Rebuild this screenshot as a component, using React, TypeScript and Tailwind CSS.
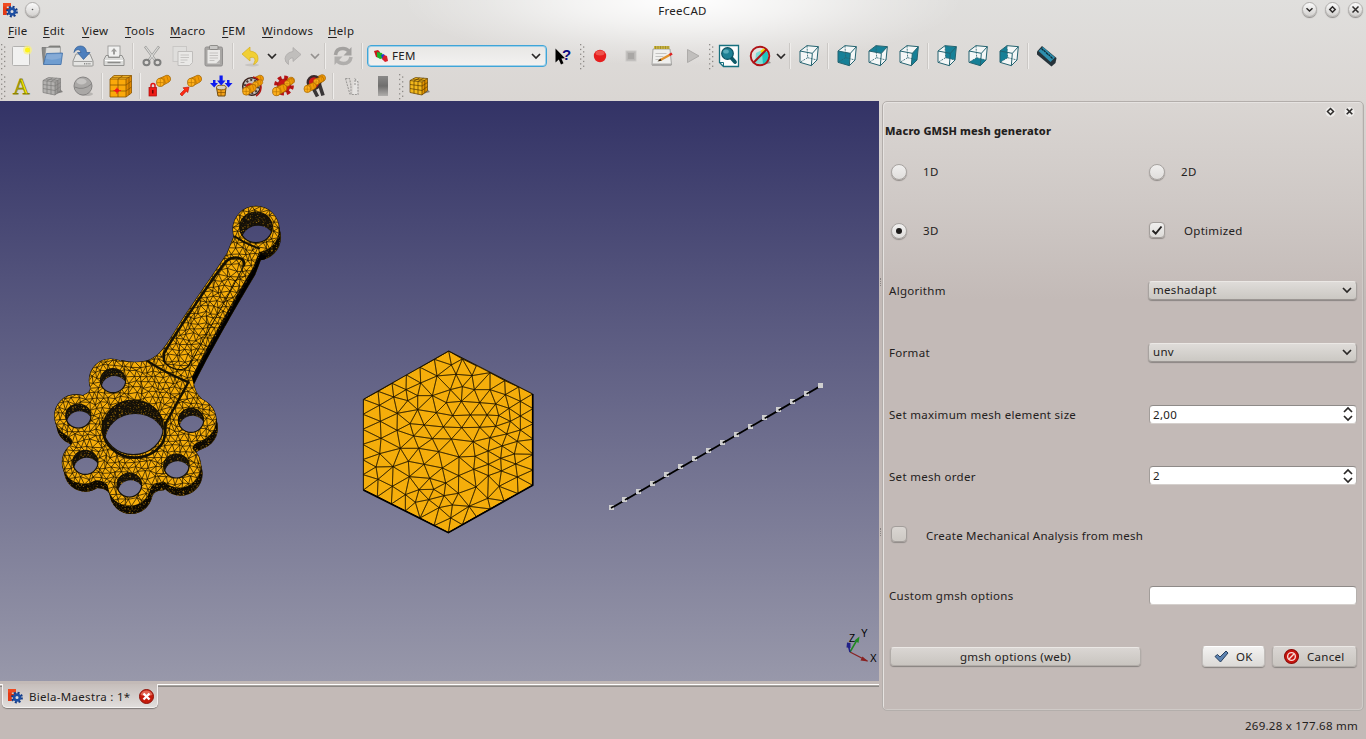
import React from "react";

type Pt = [number, number];

/* ---------- mesh helpers ---------- */

function delaunay(pts: Pt[]): [number, number, number][] {
  const n = pts.length;
  const all: Pt[] = [...pts, [-5000, -5000], [6000, -5000], [300, 9000]];
  let tris: [number, number, number][] = [[n, n + 1, n + 2]];
  const inside = (t: [number, number, number], p: Pt) => {
    const [a, b, c] = t.map((i) => all[i]);
    const d = 2 * (a[0] * (b[1] - c[1]) + b[0] * (c[1] - a[1]) + c[0] * (a[1] - b[1]));
    if (Math.abs(d) < 1e-9) return true;
    const a2 = a[0] ** 2 + a[1] ** 2;
    const b2 = b[0] ** 2 + b[1] ** 2;
    const c2 = c[0] ** 2 + c[1] ** 2;
    const ux = (a2 * (b[1] - c[1]) + b2 * (c[1] - a[1]) + c2 * (a[1] - b[1])) / d;
    const uy = (a2 * (c[0] - b[0]) + b2 * (a[0] - c[0]) + c2 * (b[0] - a[0])) / d;
    const r2 = (a[0] - ux) ** 2 + (a[1] - uy) ** 2;
    return (p[0] - ux) ** 2 + (p[1] - uy) ** 2 < r2;
  };
  for (let i = 0; i < n; i++) {
    const bad = tris.filter((t) => inside(t, all[i]));
    const count = new Map<string, [number, number, number]>();
    bad.forEach((t) =>
      [[t[0], t[1]], [t[1], t[2]], [t[2], t[0]]].forEach(([u, v]) => {
        const k = u < v ? `${u}_${v}` : `${v}_${u}`;
        const e = count.get(k);
        count.set(k, [u, v, e ? e[2] + 1 : 1]);
      }),
    );
    tris = tris.filter((t) => !bad.includes(t));
    count.forEach(([u, v, c]) => {
      if (c === 1) tris.push([u, v, i]);
    });
  }
  return tris.filter((t) => t.every((i) => i < n));
}

const HEX_EDGE: Pt[] = [
  [297, 32], [338, 56], [380, 76], [421, 97], [465, 121], [507, 140], [549, 161], [550, 205], [551, 250], [551, 297],
  [551, 342], [550, 389], [549, 435], [505, 460], [463, 482], [422, 506], [380, 529], [338, 553], [296, 577],
  [253, 556], [211, 533], [167, 512], [125, 491], [83, 469], [41, 449], [40, 403], [39, 358], [39, 312], [39, 267],
  [40, 222], [41, 177], [85, 153], [127, 129], [170, 104], [211, 81], [254, 57],
];
const HEX_IN: Pt[] = [
  [305, 74], [262, 107], [319, 102], [367, 106], [213, 128], [169, 148], [204, 166], [248, 166], [302, 148], [338, 139],
  [374, 148], [421, 148], [467, 163], [512, 183], [174, 181], [132, 170], [89, 195], [143, 219], [204, 208], [260, 217],
  [290, 187], [335, 183], [390, 187], [438, 191], [478, 204], [309, 226], [362, 224], [412, 224], [447, 226], [512, 227],
  [482, 243], [512, 269], [92, 243], [181, 250], [223, 254], [281, 260], [336, 262], [390, 261], [438, 258], [142, 270],
  [192, 287], [248, 295], [305, 296], [370, 304], [421, 292], [471, 281], [503, 303], [94, 294], [152, 324], [207, 324],
  [267, 334], [328, 350], [376, 348], [415, 332], [457, 317], [494, 341], [90, 340], [176, 363], [223, 372], [278, 383],
  [79, 380], [130, 379], [327, 406], [372, 387], [416, 372], [453, 354], [498, 371], [416, 406], [455, 392], [503, 410],
  [85, 417], [128, 438], [179, 409], [240, 414], [288, 428], [379, 440], [326, 459], [448, 438], [414, 474], [358, 498],
  [252, 447], [208, 448], [167, 463], [197, 486], [237, 478], [283, 466], [268, 502], [308, 494], [303, 533],
];
const HEX_PTS = [...HEX_EDGE, ...HEX_IN];
const HEX_MESH = delaunay(HEX_PTS)
  .map((t) => `M${HEX_PTS[t[0]].join(" ")}L${HEX_PTS[t[1]].join(" ")}L${HEX_PTS[t[2]].join(" ")}Z`)
  .join("");
const HEX_OUT = "M297 32L549 161L549 435L296 577L41 449L41 177Z";

function lattice(w: number, h: number, sx: number, sy: number, jitter: number) {
  let seed = 7;
  const rnd = () => {
    seed = (seed * 16807) % 2147483647;
    return seed / 2147483647 - 0.5;
  };
  const cols = Math.ceil(w / sx);
  const rows = Math.ceil(h / sy);
  const p: Pt[][] = [];
  for (let r = 0; r <= rows; r++) {
    p.push([]);
    for (let c = 0; c <= cols; c++)
      p[r].push([Math.round((c + (r % 2) / 2 + rnd() * jitter) * sx), Math.round((r + rnd() * jitter) * sy)]);
  }
  let d = "";
  const seg = (a: Pt, b: Pt) => (d += `M${a[0]} ${a[1]}L${b[0]} ${b[1]}`);
  for (let r = 0; r < rows; r++)
    for (let c = 1; c < cols; c++) {
      seg(p[r][c], p[r][c + 1]);
      seg(p[r][c], p[r + 1][c]);
      seg(p[r][c], p[r + 1][c + (r % 2 ? 1 : -1)]);
    }
  return d;
}
const ROD_MESH = lattice(760, 1000, 18, 16, 0.7);
const SIDE_MESH = lattice(760, 1000, 10, 9, 0.7);

/* ---------- connecting rod ---------- */

const ROD_BODY =
  "M582 140L562 190C530 240 470 325 430 385C400 430 375 480 350 497C335 508 325 514 300 516C280 518 262 517 245 512" +
  "L212 570L152 592Q152 610 132 615L107 677L84 738Q106 752 92 770L130 816L166 870Q196 870 205 890L268 884" +
  "L331 895Q338 876 366 877L417 828L476 802Q462 784 457 775Q460 760 480 754L463 690L496 635Q470 620 463 592" +
  "L455 562C500 470 580 330 640 230L660 178Z";

const LOBES = [
  [212, 571, 64], [108, 678, 64], [131, 817, 64], [268, 884, 64], [417, 828, 65], [463, 690, 65], [648, 118, 69],
];

const HOLES = [
  { cx: 219, cy: 572, rx: 38, ry: 36, dx: 4, dy: 22 },
  { cx: 115, cy: 678, rx: 38, ry: 36, dx: 4, dy: 22 },
  { cx: 136, cy: 817, rx: 38, ry: 36, dx: 4, dy: 22 },
  { cx: 268, cy: 885, rx: 37, ry: 36, dx: 4, dy: 22 },
  { cx: 409, cy: 828, rx: 38, ry: 36, dx: 4, dy: 22 },
  { cx: 453, cy: 691, rx: 38, ry: 36, dx: 4, dy: 22 },
  { cx: 280, cy: 712, rx: 90, ry: 82, dx: 6, dy: 42 },
  { cx: 648, cy: 112, rx: 49, ry: 46, dx: 6, dy: 41 },
];

const rodParts = (
  <>
    <path d={ROD_BODY} />
    {LOBES.map(([x, y, r]) => (
      <circle key={x} cx={x} cy={y} r={r} />
    ))}
  </>
);

function Rod() {
  return (
    <g transform="translate(40 190) scale(0.33333)">
      <defs>
        <linearGradient id="through" gradientUnits="userSpaceOnUse" x1="0" y1="-267" x2="0" y2="1473">
          <stop offset="0" stopColor="#333366" />
          <stop offset="1" stopColor="#9898aa" />
        </linearGradient>
        <clipPath id="rodClip">{rodParts}</clipPath>
        <clipPath id="sideClip">
          {[5, 10, 15, 20, 24].map((o) => (
            <path key={o} d={ROD_BODY} transform={`translate(${o * 0.2} ${o})`} />
          ))}
          {[5, 10, 15, 20, 24].flatMap((o) =>
            LOBES.map(([x, y, r]) => <circle key={`${o}-${x}`} cx={x + o * 0.2} cy={y + o} r={r} />),
          )}
        </clipPath>
        <clipPath id="holeClip">
          {HOLES.map((h, i) => (
            <ellipse key={i} cx={h.cx} cy={h.cy} rx={h.rx} ry={h.ry} />
          ))}
        </clipPath>
      </defs>
      {[6, 12, 18, 24].map((o) => (
        <g key={o} transform={`translate(${o * 0.25} ${o})`} fill="#130d02">
          {rodParts}
        </g>
      ))}
      <g clipPath="url(#sideClip)">
        <rect width="760" height="1000" fill="#9a6c08" />
        <path d={SIDE_MESH} stroke="#0c0800" strokeWidth="4" />
        <path d="M672 195L650 242L455 590" stroke="#000" strokeWidth="20" fill="none" />
      </g>
      <g fill="#141003" stroke="#141003" strokeWidth="3.500">
        {rodParts}
      </g>
      <g fill="#f7ae0a">{rodParts}</g>
      <g clipPath="url(#rodClip)">
        <path d={ROD_MESH} stroke="#120c00" strokeWidth="2.300" strokeOpacity=".9" />
        <path d="M372 300L520 100L560 190L350 500Z" fill="none" />
      </g>
      <g fill="none" stroke="#141003">
        <path d="M583 138Q612 160 660 176" strokeWidth="6" />
        <path d="M372 516L372 490C400 440 520 260 560 212Q580 197 603 206Q617 214 611 228" strokeWidth="7.500" />
        <path d="M611 228C570 310 500 430 452 520" strokeWidth="3" />
        <path d="M372 516Q400 545 432 537Q450 530 452 512" strokeWidth="3.500" />
        <path d="M322 512Q360 540 445 577L377 700" strokeWidth="7" />
        <path d="M190 690Q182 745 214 775Q245 805 290 803Q345 798 370 755Q378 730 376 695" strokeWidth="8" />
      </g>
      <g clipPath="url(#holeClip)">
        <rect width="760" height="1000" fill="#94680a" />
        <path d={SIDE_MESH} stroke="#141008" strokeWidth="4" />
        {HOLES.map((h, i) => (
          <ellipse key={i} cx={h.cx + h.dx} cy={h.cy + h.dy} rx={h.rx} ry={h.ry} fill="url(#through)" />
        ))}
      </g>
      <g fill="none" stroke="#171205" strokeWidth="3.500">
        {HOLES.map((h, i) => (
          <ellipse key={i} cx={h.cx} cy={h.cy} rx={h.rx} ry={h.ry} />
        ))}
      </g>
    </g>
  );
}

function Viewport() {
  const nodes = Array.from({ length: 16 }, (_, i) => [611.5 + i * 13.97, 508 - i * 8.15]);
  return (
    <svg width="879" height="580" viewBox="0 101 879 580" className="block">
      <defs>
        <linearGradient id="sky" x1="0" y1="0" x2="0" y2="1">
          <stop offset="0" stopColor="#333366" />
          <stop offset="1" stopColor="#9898aa" />
        </linearGradient>
        <clipPath id="hexClip">
          <path d={HEX_OUT} />
        </clipPath>
      </defs>
      <rect y="101" width="879" height="580" fill="url(#sky)" />
      <Rod />
      <g transform="translate(349.7 340.3) scale(0.33333)">
        <path d={HEX_OUT} fill="#f5ae0b" />
        <g clipPath="url(#hexClip)">
          <path d={HEX_MESH} fill="none" stroke="#1c1400" strokeWidth="1.700" />
        </g>
        <path d={HEX_OUT} fill="none" stroke="#151000" strokeWidth="2.800" />
        <path d="M549 161L549 435L296 577L41 449" fill="none" stroke="#000" strokeWidth="5" />
      </g>
      <path d="M611.5 508L820.500 386" stroke="#000" strokeWidth="1.900" />
      {nodes.map(([x, y], i) => (
        <g key={i}>
          <rect x={Math.round(x) - 3} y={Math.round(y) - 3} width="5" height="5" fill="#cfcfcf" />
          {i < 15 && <path d={`M${x - 0.5} ${y}l3 -1.8`} stroke="#000" strokeWidth="1.600" />}
        </g>
      ))}
      <g fontFamily="Liberation Sans" fontSize="10" fill="#000">
        <path d="M850 652L867.5 661" stroke="#882222" strokeWidth="1.300" />
        <path d="M868 661.5L860.5 660.5L862.5 656.5Z" fill="#882222" />
        <path d="M850 652L857 640" stroke="#1f8a1f" strokeWidth="1.500" />
        <path d="M859.5 636.5L854.5 640.5L858.5 643Z" fill="#1f8a1f" />
        <path d="M850 652L848.5 646" stroke="#222288" strokeWidth="1.500" />
        <path d="M847 642.5L850.5 643L850.5 648L846.5 647.5Z" fill="#222288" />
        <text x="849" y="642">Z</text>
        <text x="861" y="637">Y</text>
        <text x="870" y="662">X</text>
      </g>
    </svg>
  );
}

/* ---------- icons ---------- */

function Svg({ children, s = 24 }: { children: React.ReactNode; s?: number }) {
  return (
    <svg width={s} height={s} viewBox="0 0 24 24" fill="none" className="shrink-0">
      {children}
    </svg>
  );
}

function Logo() {
  return (
    <svg width="16" height="16" viewBox="0 0 16 16" className="shrink-0">
      <rect x="1" y="1" width="3.800" height="12" fill="#e33a16" />
      <rect x="1" y="1" width="8" height="3.500" fill="#f04a20" />
      <rect x="4" y="6" width="4" height="3" fill="#d8350f" />
      <circle cx="10" cy="9.500" r="4.700" fill="none" stroke="#123a86" strokeWidth="2.400" strokeDasharray="1.950 1.740" />
      <circle cx="10" cy="9.500" r="2.900" fill="#dedede" stroke="#1d4fa3" strokeWidth="2.700" />
    </svg>
  );
}

const NewIcon = () => (
  <Svg>
    <rect x="3.500" y="2.500" width="17" height="19" rx="1" fill="#f1f1f0" stroke="#b3b2b0" />
    <circle cx="18.500" cy="6" r="4.500" fill="#fbf27a" opacity=".7" />
    <circle cx="18.500" cy="6" r="2.500" fill="#fdf21a" />
  </Svg>
);
const OpenIcon = () => (
  <Svg>
    <path d="M2 3.500H8L9.500 2H20V20H3.500Z" fill="#8a8a88" stroke="#6d6d6b" strokeWidth=".7" />
    <path d="M6 3.500H20.500L20 12H5Z" fill="#dcdcda" stroke="#8f8f8d" strokeWidth=".6" />
    <path d="M6.500 9.500L22.500 9L21 20.500H3.500Z" fill="#6f9dd0" stroke="#3f6fa8" strokeWidth=".8" />
    <path d="M7 10.500L21.500 10L21 14Q12 17 5.500 14.500Z" fill="#86abd6" />
  </Svg>
);
const SaveIcon = () => (
  <Svg>
    <path d="M5 10H19L22 17V21.500Q22 22 21 22H3Q2 22 2 21.500V17Z" fill="#e5e5e3" stroke="#8c8c8a" strokeWidth=".9" />
    <path d="M2.500 17.500H21.500" stroke="#a4a4a2" />
    <path d="M13 19.700h7" stroke="#8a8a88" strokeWidth="1.600" strokeDasharray="1 .8" />
    <path d="M3 8.500Q4 2 9.500 2Q15 2 15.500 8.500H19L12.500 15.500L6.500 8.500H10Q9.500 5.500 7 5.500Q4.500 5.500 3 8.500Z" fill="#4c7fbe" stroke="#2d5a94" strokeWidth=".7" />
  </Svg>
);
const PrintIcon = () => (
  <Svg>
    <rect x="6" y="2" width="12" height="11" fill="#f1f1f0" stroke="#929290" strokeWidth=".8" />
    <path d="M12 4L15 7.500H13V10.500H11V7.500H9Z" fill="#9d9d9b" />
    <path d="M4 11.500H6.500V13.500H17.500V11.500H20L22 15.500V21.500H2V15.500Z" fill="#dcdcda" stroke="#8b8b89" strokeWidth=".9" />
    <path d="M3 16.500H21" stroke="#fff" />
    <path d="M5.500 18.500H18.500" stroke="#8c8c8a" strokeWidth="1.500" />
  </Svg>
);
const CutIcon = () => (
  <Svg>
    <path d="M5 2.500L15.500 16.500M19 2.500L8.500 16.500" stroke="#9b9b99" strokeWidth="2.500" />
    <path d="M5.500 3L15 16M18.500 3L9 16" stroke="#dededc" strokeWidth="1.200" />
    <ellipse cx="6.500" cy="18.500" rx="3" ry="2.700" stroke="#7f7f7e" strokeWidth="2" />
    <ellipse cx="17.500" cy="18.500" rx="3" ry="2.700" stroke="#7f7f7e" strokeWidth="2" />
  </Svg>
);
const CopyIcon = () => (
  <Svg>
    <rect x="2" y="2.500" width="13.500" height="15" fill="#dfdedc" stroke="#c9c7c5" />
    <path d="M7 7.500H21.500V18.500L18.500 21.500H7Z" fill="#e9e8e6" stroke="#bfbdbb" />
    <path d="M9.500 11h8.500M9.500 13.500h8.500M9.500 16h7M9.500 18.500h4" stroke="#c6c4c2" strokeWidth="1" />
  </Svg>
);
const PasteIcon = () => (
  <Svg>
    <rect x="3" y="3" width="17.500" height="19" rx="1.500" fill="#a8a6a4" stroke="#918f8e" />
    <rect x="5.500" y="6" width="12.500" height="13.500" fill="#e9e8e6" />
    <rect x="7.500" y="1.500" width="8.500" height="4" rx="1" fill="#c8c7c5" stroke="#7d7c7a" strokeWidth=".8" />
    <path d="M7.500 9h8.500M7.500 11.500h8.500M7.500 14h8.500M7.500 16.500h5" stroke="#c4c2c0" />
    <path d="M18 15.500V19.500H14Z" fill="#b3b1af" />
  </Svg>
);
const UndoIcon = () => (
  <Svg>
    <ellipse cx="13" cy="21" rx="7" ry="1.500" fill="#00000018" />
    <path d="M3 10L11 3V7Q19 8 19 14.500Q19 19 14.500 20.500Q17 16 15.500 14Q14 13 11 13.500V17Z" fill="#f1cf35" stroke="#d5ae1c" strokeWidth=".7" />
  </Svg>
);
const RedoIcon = () => (
  <Svg>
    <path d="M19 10.500L11 3.500V7.500Q4 8.500 3 14.500Q3 18.500 6.500 20.500Q5.500 16 8 14.500Q9.500 13.700 11 14V17.500Z" fill="#c0bebc" stroke="#adabaa" strokeWidth=".8" />
  </Svg>
);
const RefreshIcon = () => (
  <Svg>
    <path d="M4.500 11Q5 4.500 12 4.500Q15.500 4.500 17.500 7" stroke="#a3a19f" strokeWidth="3.600" />
    <path d="M20.500 3V11.500H12.500Z" fill="#a3a19f" />
    <path d="M20 13Q19 19.500 12.500 19.500Q8.500 19.500 6.500 17" stroke="#b0aeac" strokeWidth="3.600" />
    <path d="M3.500 21V12.500H11.500Z" fill="#b0aeac" />
  </Svg>
);
const WhatsThis = () => (
  <Svg>
    <path d="M4.500 4.500V18.500L7.800 15.500L10 20.500L12.500 19.300L10.400 14.500L14 14.200Z" fill="#000" />
    <text x="11" y="16" fontSize="15" fontWeight="700" fontFamily="Liberation Sans" fill="#0a0a80">
      ?
    </text>
  </Svg>
);
const RecIcon = () => (
  <Svg>
    <circle cx="12" cy="12" r="6.200" fill="#e61e1e" />
    <ellipse cx="12" cy="9" rx="4.500" ry="2.500" fill="#f26a60" opacity=".7" />
  </Svg>
);
const StopIcon = () => (
  <Svg>
    <rect x="7" y="7" width="10" height="10" fill="#bab8b6" stroke="#cbc9c7" />
    <rect x="9" y="9" width="6" height="6" fill="#a9a7a5" />
  </Svg>
);
const NoteIcon = () => (
  <Svg>
    <path d="M3 5L20 5L21.500 21H2Z" fill="#f0f0ee" stroke="#9c9c9a" strokeWidth=".9" />
    <path d="M2.500 19.500H21V22H2Z" fill="#adaba9" />
    <rect x="4" y="2" width="15.500" height="3" fill="#c9b43f" />
    <path d="M5.500 2v3M8 2v3M10.500 2v3M13 2v3M15.500 2v3M18 2v3" stroke="#8f7e2a" strokeWidth=".7" />
    <path d="M5.500 9.500h11M5.500 12.500h8M5.500 15.500h4" stroke="#c4c4c2" />
    <path d="M10.500 16L20 10.700" stroke="#e0912c" strokeWidth="2.400" />
    <path d="M19.500 11L22 9.500" stroke="#d22" strokeWidth="2.600" />
    <path d="M7.500 17.500L10.300 14.600L11.500 16.700Z" fill="#3e2b12" />
  </Svg>
);
const PlayIcon = () => (
  <Svg>
    <path d="M6.500 5.500L18 12L6.500 18.500Z" fill="#c1bfbd" stroke="#adaba9" />
  </Svg>
);
const FitIcon = () => (
  <Svg>
    <path d="M2.500 1.500H21.500V22.500H6.500L2.500 18.500Z" fill="#fdfdfd" stroke="#17707f" strokeWidth="1.300" />
    <path d="M2.500 18.500H6.500V22.500" stroke="#17707f" />
    <path d="M14 13.500L18 18" stroke="#0f5a68" strokeWidth="3.800" strokeLinecap="round" />
    <circle cx="10.500" cy="9.500" r="5.800" fill="#1e7f93" stroke="#0c5160" strokeWidth="1.200" />
    <ellipse cx="9" cy="7.500" rx="2.800" ry="2" fill="#66b6c4" opacity=".8" />
  </Svg>
);
const NoDrawIcon = () => (
  <Svg>
    <path d="M15 21L23 19L20 16Z" fill="#00000055" />
    <path d="M8 9L14 6L20 7.500V17L15 20.500L7 19Z" fill="#7fdcd6" />
    <path d="M14 9L20 7.500V17L15 20.500Z" fill="#1fc4c0" />
    <path d="M13 8L18 4.500" stroke="#f0e000" strokeWidth="2.500" />
    <circle cx="12" cy="12" r="9.300" stroke="#af1216" strokeWidth="1.900" />
    <path d="M5.700 18.500L18.500 5.500" stroke="#af1216" strokeWidth="2" />
  </Svg>
);

const FACES: Record<string, string> = {
  none: "",
  front: "M3 18L40 25L37 62L3 52Z",
  top: "M3 18L24 2L58 5L40 25Z",
  right: "M40 25L58 5L54 45L37 62Z",
  rear: "M24 2L58 5L54 45L26 38Z",
  bottom: "M3 52L26 38L54 45L37 62Z",
  left: "M3 18L24 2L26 38L3 52Z",
};
function ViewCube({ face }: { face: string }) {
  return (
    <svg width="20" height="22" viewBox="0 0 60 66" fill="none">
      <path d="M3 18L24 2L58 5L54 45L37 62L3 52Z" fill="#f4f7f7" />
      {FACES[face] && <path d={FACES[face]} fill="#168097" />}
      <path d="M24 2L26 38L54 45M26 38L3 52" stroke="#2b6470" strokeWidth="2.500" strokeDasharray="6 3" />
      <path d="M3 18L24 2L58 5L54 45L37 62L3 52ZM3 18L40 25L58 5M40 25L37 62" stroke="#246370" strokeWidth="3" />
    </svg>
  );
}
const RulerIcon = () => (
  <Svg>
    <path d="M2 7.500L7 2L21.500 14L20.500 19L16.500 22.500L2 10.500Z" fill="#26333a" />
    <path d="M3.500 7L8 3L20 13.500L15.500 18Z" fill="#2e8fae" />
    <path d="M6.500 4.500l2 2M9 6.500l1.500 1.500M11 8.500l2 2M13.500 10.500l1.500 1.500M15.500 12.500l2 2" stroke="#0d2c38" strokeWidth="1.200" />
  </Svg>
);
const AIcon = () => (
  <Svg>
    <text x="4" y="20" fontSize="23" fontFamily="Liberation Serif" fill="#fdf000" stroke="#8a8200" strokeWidth=".8">
      A
    </text>
  </Svg>
);
function GridBox({ fill, line, side }: { fill: string; line: string; side: string }) {
  return (
    <Svg>
      <path d="M14 20.500L23 18L20 15Z" fill="#00000066" />
      <path d="M3 6.500L15 8V21L3 18.500Z" fill={fill} />
      <path d="M15 8L20.500 4.500V16.500L15 21Z" fill={side} />
      <path d="M3 6.500L8.500 3.500L20.500 4.500L15 8Z" fill={fill} />
      <path
        d="M3 6.500L15 8V21L3 18.500ZM15 8L20.500 4.500V16.500L15 21M3 6.500L8.500 3.500L20.500 4.500M3 10.500L15 12L20.500 8.500M3 14.500L15 16.500L20.500 12.500M7 7V19.500M11 7.500V20.500M6 5L18 6.500M12.500 4L7 7M16.500 4.200L11 7.500M17.800 6.500V18.700"
        stroke={line}
        strokeWidth=".7"
      />
    </Svg>
  );
}
const SphereIcon = () => (
  <Svg>
    <ellipse cx="15" cy="20" rx="7" ry="2" fill="#00000028" />
    <circle cx="12" cy="12" r="9" fill="#aaa8a6" stroke="#868483" />
    <path d="M3.500 13Q12.500 17 20.500 10" stroke="#868483" />
    <ellipse cx="10.500" cy="7.500" rx="5" ry="3" fill="#c6c4c2" />
  </Svg>
);
const AnalysisIcon = () => (
  <Svg>
    <path d="M1 5L5 1.500H22.500L17 5Z" fill="#ffc02a" />
    <path d="M1 5H17V23H1Z" fill="#fba90a" />
    <path d="M17 5L22.500 1.500V19L17 23Z" fill="#e38a00" />
    <path d="M1 5H17V23H1ZM17 5L22.500 1.500V19L17 23M1 5L5 1.500H22.500M1 11H17L22.500 7M1 17H17L22.500 13M9 5V23M20 3V21M3 3.300H20M9 5L14 1.500" stroke="#8a5600" strokeWidth=".8" />
    <circle cx="8" cy="16.500" r="2.100" fill="#f21818" />
    <path d="M4.500 16.500h7.500M8 13.500v6.500" stroke="#f21818" strokeWidth=".9" />
  </Svg>
);
function Cyl({ x, y, k = 1 }: { x: number; y: number; k?: number }) {
  return (
    <g transform={`translate(${x} ${y}) scale(${k})`}>
      <path d="M2.500 4L9.500 .8Q13 .300 13.500 4Q13.500 6 12 7L5.500 10.500Z" fill="#f29a06" stroke="#a06200" strokeWidth=".7" />
      <ellipse cx="4" cy="7.300" rx="3.500" ry="3.800" fill="#ffb11c" stroke="#a06200" strokeWidth=".7" />
      <path d="M.8 7.500h6.400M4 4v7M7 2.500l2 6M10 1.500l1.500 5" stroke="#b87400" strokeWidth=".6" />
    </g>
  );
}
const FixedIcon = () => (
  <Svg>
    <Cyl x={9} y={0.5} k={1.08} />
    <path d="M4 13.500V11.500Q4 9.500 6 9.500Q8 9.500 8 11.500V13.500" stroke="#e51212" strokeWidth="1.500" />
    <rect x="2" y="13.500" width="7.500" height="8.500" fill="#ee1c16" stroke="#a80c0c" strokeWidth=".7" />
    <path d="M5.800 16v3.500" stroke="#5d0000" strokeWidth="1.300" />
  </Svg>
);
const ForceIcon = () => (
  <Svg>
    <Cyl x={9} y={0.5} k={1.08} />
    <path d="M11 13L9.800 18.500L8.300 17.200L4 22L2 20L6.500 15.500L5 13.800Z" fill="#ff2a14" stroke="#b80f00" strokeWidth=".6" />
  </Svg>
);
const PressureIcon = () => (
  <Svg>
    <path d="M7.500 13.500H17L16 22H9Z" fill="#f2a21a" stroke="#6d4a12" />
    <ellipse cx="12.300" cy="13.500" rx="4.800" ry="2.300" fill="#d6cfc0" stroke="#8a5a10" />
    <path d="M12 16v6M8 18.500h8.500" stroke="#8a5200" strokeWidth=".7" />
    <path d="M10.500 1.500H13.700V6.500H16.500L12.200 11.500L8 6.500H10.500ZM4 6H6.500V9H9L5.200 13.500L1 9H4ZM18 6H20.500V9H23.500L19.500 13.500L15.700 9H18Z" fill="#0d1bf0" />
  </Svg>
);
const BearingIcon = () => (
  <Svg>
    <Cyl x={10} y={0.5} />
    <circle cx="11.500" cy="12.500" r="8.800" fill="#c6c0bd" stroke="#39221d" strokeWidth="1.500" />
    <path d="M13 3Q21.500 5 21 14Q20.500 19.500 16 22" stroke="#b41512" strokeWidth="1.500" />
    <circle cx="11.500" cy="12.500" r="6.500" stroke="#4a3d3a" strokeWidth="2.200" strokeDasharray="2 2.080" />
    <Cyl x={12} y={5} k={0.8} />
    <circle cx="10" cy="14" r="4.800" fill="#c81a14" />
    <Cyl x={2} y={9.500} k={1.05} />
  </Svg>
);
const GearIcon = () => (
  <Svg>
    <Cyl x={10} y={2.500} />
    <circle cx="13" cy="11.500" r="7.800" stroke="#b51214" strokeWidth="4.200" strokeDasharray="3.500 2.620" />
    <circle cx="13" cy="11.500" r="6.500" fill="#c91717" stroke="#8e0b0b" strokeWidth=".6" />
    <Cyl x={13} y={4} k={0.75} />
    <Cyl x={1} y={9.500} k={1.1} />
  </Svg>
);
const PulleyIcon = () => (
  <Svg>
    <Cyl x={10} y={0} />
    <path d="M8 8L15.500 22.500M16 6L21 21.500" stroke="#393637" strokeWidth="3.600" />
    <circle cx="12" cy="8.500" r="6.300" fill="#d01a1a" stroke="#39292a" strokeWidth="2.300" />
    <Cyl x={11} y={2} k={0.8} />
    <Cyl x={1.500} y={8} k={0.95} />
  </Svg>
);
const DisplacedIcon = () => (
  <Svg>
    <path d="M14 5H18V20.500H12.500Z" fill="#e5e3e1" />
    <path d="M5.500 4.500H9.500L11 11.500V20.500H18V8L15 5V11" stroke="#9b9997" strokeWidth="1.100" strokeDasharray="2 1" />
    <path d="M5.500 4.500L10 20.500" stroke="#979593" strokeDasharray="2 1" />
  </Svg>
);
const GradIcon = () => (
  <svg width="10" height="20" viewBox="0 0 11 21" preserveAspectRatio="none">
    <defs>
      <linearGradient id="gbar" x1="0" y1="0" x2="0" y2="1">
        <stop offset="0" stopColor="#8a8988" />
        <stop offset=".5" stopColor="#6f6e6d" />
        <stop offset="1" stopColor="#b0aeac" />
      </linearGradient>
    </defs>
    <rect width="11" height="21" fill="url(#gbar)" />
  </svg>
);

/* ---------- small parts ---------- */

const Slot = ({ children }: { children: React.ReactNode }) => (
  <div className="flex h-full w-[31px] shrink-0 items-center justify-center">{children}</div>
);
const Sep = () => (
  <div className="flex h-full w-[7px] shrink-0 items-center justify-center">
    <div className="h-[26px] w-[2px] border-r border-[#efedeb] bg-[#cbc8c5]" />
  </div>
);
function Grip({ cls = "w-[6px]" }: { cls?: string }) {
  return (
    <div className={"flex shrink-0 items-center " + cls}>
      <svg width="6" height="28" viewBox="0 0 6 28" className="shrink-0">
        {[0, 1, 2, 3, 4, 5].map((i) => (
          <g key={i} fill="#8e8a87">
            <rect x="1" y={2 + i * 4.8} width="1.300" height="1.300" />
            {i < 5 && <rect x="4" y={4.4 + i * 4.8} width="1.300" height="1.300" />}
          </g>
        ))}
      </svg>
    </div>
  );
}
function Chevron({ color = "#2a2827" }: { color?: string }) {
  return (
    <svg width="12" height="8" viewBox="0 0 12 8" fill="none" className="shrink-0">
      <path d="M2 2L6 6L10 2" stroke={color} strokeWidth="1.700" />
    </svg>
  );
}
function RoundButton({ kind }: { kind: "dot" | "down" | "diamond" | "x" }) {
  return (
    <div className="flex size-[15px] items-center justify-center rounded-full border border-[#b0aeac] bg-linear-to-b from-[#fafafa] to-[#d3d1cf] shadow-[0_1px_1px_#8d8a88]">
      <svg width="11" height="11" viewBox="0 0 11 11" fill="none" stroke="#2d2b2a" strokeWidth="1.500">
        {kind === "dot" && <circle cx="5.500" cy="5.500" r=".8" fill="#555" stroke="none" />}
        {kind === "down" && <path d="M2.500 4.200L5.500 7L8.500 4.200" />}
        {kind === "diamond" && <path d="M5.500 2.800L8.200 5.500L5.500 8.200L2.800 5.500Z" />}
        {kind === "x" && <path d="M2.500 2.500L8.500 8.500M8.500 2.500L2.500 8.500" />}
      </svg>
    </div>
  );
}
function Radio({ on = false }: { on?: boolean }) {
  return (
    <div className="flex size-4 items-center justify-center rounded-full border border-[#a8a4a1] bg-linear-to-b from-[#f0efee] to-[#e0dedc] shadow-[0_1px_1px_#8f8a87]">
      {on && <div className="size-[6px] rounded-full bg-[#1d1b1a]" />}
    </div>
  );
}
function Check({ on = false }: { on?: boolean }) {
  return (
    <div
      className={
        "mb-[2px] flex size-4 items-center justify-center rounded-[4px] border border-[#a39e9b] shadow-[0_1px_1px_#8f8a87] " +
        (on ? "bg-linear-to-b from-[#f0efee] to-[#dddbd8]" : "bg-linear-to-b from-[#dad6d2] to-[#cdc9c4]")
      }
    >
      {on && (
        <svg width="12" height="12" viewBox="0 0 12 12" fill="none">
          <path d="M1.500 6.500L4.700 9.500L10.500 2.500" stroke="#232120" strokeWidth="1.900" />
        </svg>
      )}
    </div>
  );
}
function Combo({ value }: { value: string }) {
  return (
    <div className="flex h-[19px] w-[209px] items-center justify-between rounded-[4px] border border-t-[#ebe8e5] border-r-[#a8a3a0] border-b-[#9b9693] border-l-[#a8a3a0] bg-linear-to-b from-[#dfdcd9] to-[#cbc8c3] pr-[3px] pl-[4px] shadow-[0_1px_1px_#8b8683]">
      <span>{value}</span>
      <Chevron />
    </div>
  );
}
function Spin({ value }: { value: string }) {
  return (
    <div className="flex h-[19px] w-[208px] items-center justify-between rounded-[4px] border border-t-[#8e8a88] border-r-[#b5b0ad] border-b-[#d5d0cd] border-l-[#a29d9a] bg-white pr-[2px] pl-[3px]">
      <span className="pt-px">{value}</span>
      {value && (
        <svg width="12" height="16" viewBox="0 0 12 16" fill="none">
          <path d="M2 6L6 2L10 6M2 10L6 14L10 10" stroke="#2a2827" strokeWidth="1.700" />
        </svg>
      )}
    </div>
  );
}
function Field({ label, cls, children }: { label: string; cls: string; children: React.ReactNode }) {
  return (
    <div className={"flex items-center justify-between pr-[6px] pl-[6px] " + cls}>
      <span className="pt-[2px]">{label}</span>
      {children}
    </div>
  );
}

const MENUS: [string, string][] = [
  ["File", "w-[35px]"],
  ["Edit", "w-[39px]"],
  ["View", "w-[43px]"],
  ["Tools", "w-[45px]"],
  ["Macro", "w-[52px]"],
  ["FEM", "w-[40px]"],
  ["Windows", "w-[66px]"],
  ["Help", "w-[40px]"],
];

export default function App() {
  return (
    <div className="flex h-[739px] w-[1366px] flex-col overflow-hidden bg-[radial-gradient(ellipse_280px_66px_at_683px_0px,#ffffff_0%,#ffffffa0_40%,#ffffff40_72%,#ffffff00_100%),linear-gradient(to_bottom,#e0dfdd_0px,#dad6d3_100px,#cfc9c6_200px,#c3bab7_300px)] font-['Noto_Sans',sans-serif] text-[11.500px] leading-4 tracking-[0.300px] whitespace-nowrap text-[#232120]">
      <header className="flex h-[21px] shrink-0 items-center justify-between pr-[3px] pl-[2px]">
        <div className="flex w-[100px] items-center gap-[7px] pb-[2px]">
          <Logo />
          <RoundButton kind="dot" />
        </div>
        <span>FreeCAD</span>
        <div className="flex w-[100px] items-center justify-end gap-2 pb-[2px]">
          <RoundButton kind="down" />
          <RoundButton kind="diamond" />
          <RoundButton kind="x" />
        </div>
      </header>

      <nav className="flex h-[20px] shrink-0 items-center pl-2">
        {MENUS.map(([m, w]) => (
          <span key={m} className={w}>
            <span className="underline underline-offset-2">{m[0]}</span>
            {m.slice(1)}
          </span>
        ))}
      </nav>

      <div className="flex h-[30px] shrink-0 items-center">
        <Grip cls="w-[5px]" />
        <Slot><NewIcon /></Slot>
        <Slot><OpenIcon /></Slot>
        <Slot><SaveIcon /></Slot>
        <Slot><PrintIcon /></Slot>
        <Sep />
        <Slot><CutIcon /></Slot>
        <Slot><CopyIcon /></Slot>
        <Slot><PasteIcon /></Slot>
        <Sep />
        <div className="flex w-[30px] justify-center"><UndoIcon /></div>
        <Chevron />
        <Slot><RedoIcon /></Slot>
        <Chevron color="#94918f" />
        <Sep />
        <div className="flex w-[30px] justify-center"><RefreshIcon /></div>
        <Sep />
        <div className="ml-[2px] flex h-[22px] w-[180px] items-center rounded-[4px] border-[1.500px] border-[#3fa5d8] bg-linear-to-b from-[#e8e7e5] to-[#f3f2f1] pr-1 pl-[5px] shadow-[inset_0_0_0_1px_#9fd0e8]">
          <svg width="16" height="14" viewBox="0 0 16 14">
            <path d="M1 2L5 1L7 3V9L3 8Z" fill="#c51a1a" />
            <path d="M4 3L9 4L11 9L7 10L4 8Z" fill="#19b52b" />
            <path d="M8 6L11 5L13 9L10 11Z" fill="#2036d8" />
            <path d="M11 6L14 7L15 12L12 13L9 10Z" fill="#d8202a" />
          </svg>
          <span className="grow pl-[3px]">FEM</span>
          <Chevron />
        </div>
        <div className="flex w-[32px] justify-center"><WhatsThis /></div>
        <Grip cls="w-[5px]" />
        <Slot><RecIcon /></Slot>
        <Slot><StopIcon /></Slot>
        <Slot><NoteIcon /></Slot>
        <Slot><PlayIcon /></Slot>
        <Grip cls="w-[5px]" />
        <Slot><FitIcon /></Slot>
        <div className="flex w-[31px] justify-center"><NoDrawIcon /></div>
        <Chevron />
        <div className="-ml-px"><Sep /></div>
        <Slot><ViewCube face="none" /></Slot>
        <Sep />
        <Slot><ViewCube face="front" /></Slot>
        <Slot><ViewCube face="top" /></Slot>
        <Slot><ViewCube face="right" /></Slot>
        <Sep />
        <Slot><ViewCube face="rear" /></Slot>
        <Slot><ViewCube face="bottom" /></Slot>
        <Slot><ViewCube face="left" /></Slot>
        <Sep />
        <Slot><RulerIcon /></Slot>
      </div>

      <div className="flex h-[30px] shrink-0 items-center">
        <Grip cls="w-[5px]" />
        <Slot><AIcon /></Slot>
        <Slot><GridBox fill="#b3b1af" side="#9a9896" line="#7d7b7a" /></Slot>
        <Slot><SphereIcon /></Slot>
        <Sep />
        <Slot><AnalysisIcon /></Slot>
        <Sep />
        <Slot><FixedIcon /></Slot>
        <Slot><ForceIcon /></Slot>
        <Slot><PressureIcon /></Slot>
        <Slot><BearingIcon /></Slot>
        <Slot><GearIcon /></Slot>
        <Slot><PulleyIcon /></Slot>
        <Sep />
        <Slot><DisplacedIcon /></Slot>
        <Slot><GradIcon /></Slot>
        <Grip cls="w-[5px]" />
        <Slot><GridBox fill="#f2b81c" side="#e09200" line="#5e3d00" /></Slot>
      </div>

      <main className="flex h-[610px] shrink-0">
        <section className="w-[879px] shrink-0">
          <Viewport />
          <div className="h-[3px]" />
          <div className="flex h-[27px] items-start">
            <div className="h-[3px] w-[2px] border-t border-b border-t-white border-b-[#8b8784]" />
            <div className="flex h-[24px] w-[156px] items-center rounded-b-[5px] border border-t-0 border-[#f4f2f1] bg-linear-to-b from-[#c6bebb] to-[#e0dddb] pt-px pr-[3px] pl-[4px] shadow-[0_1px_1px_#7f7b78]">
              <Logo />
              <span className="grow pt-px pl-[6px]">Biela-Maestra : 1*</span>
              <svg width="15" height="15" viewBox="0 0 15 15">
                <circle cx="7.500" cy="7.500" r="7" fill="#c51a0a" stroke="#8d1108" />
                <path d="M1.500 6Q2.500 1.500 7.500 1.500Q12.500 1.500 13.500 6Q7.500 8 1.500 6Z" fill="#e2624f" />
                <path d="M4.500 4.500L10.500 10.500M10.500 4.500L4.500 10.500" stroke="#fff" strokeWidth="2.400" />
              </svg>
            </div>
            <div className="h-[3px] grow border-t border-b border-t-white border-b-[#8b8784] bg-[#a9a5a1]" />
          </div>
        </section>

        <div className="flex w-[3px] shrink-0 flex-col items-center pt-[177px]">
          <div className="mb-[242px] h-[8px] border-l border-dotted border-[#8b8785]" />
          <div className="h-[8px] border-l border-dotted border-[#8b8785]" />
        </div>

        <aside className="flex w-[482px] flex-col rounded-[5px] border border-[#b3aeab] shadow-[inset_1px_1px_0_#e6e3e1,inset_-1px_-1px_0_#cfcac7]">
          <div className="flex h-[18px] shrink-0 items-center justify-end gap-[8px] pr-[8px]">
            <svg width="11" height="11" viewBox="0 0 11 11" fill="none" stroke="#2d2b2a" strokeWidth="1.500">
              <circle cx="5.500" cy="6" r="5" fill="#eeecea" stroke="none" />
              <path d="M5.500 2.500L8.500 5.500L5.500 8.500L2.500 5.500Z" />
            </svg>
            <svg width="11" height="11" viewBox="0 0 11 11" fill="none" stroke="#2d2b2a" strokeWidth="1.600">
              <circle cx="5.500" cy="6" r="5" fill="#eeecea" stroke="none" />
              <path d="M2.700 2.700L8.300 8.300M8.300 2.700L2.700 8.300" />
            </svg>
          </div>
          <h1 className="h-[21px] shrink-0 pt-[3px] pl-[2px] text-[11px] font-extrabold tracking-[0.130px]">
            Macro GMSH mesh generator
          </h1>
          <div className="flex h-[62px] shrink-0 items-center pl-[8px]">
            <Radio />
            <span className="w-[242px] pl-[16px]">1D</span>
            <Radio />
            <span className="pl-[16px]">2D</span>
          </div>
          <div className="flex h-[56px] shrink-0 items-center pl-[8px]">
            <Radio on />
            <span className="w-[242px] pl-[16px]">3D</span>
            <Check on />
            <span className="pl-[19px]">Optimized</span>
          </div>
          <Field label="Algorithm" cls="h-[62px]"><Combo value="meshadapt" /></Field>
          <Field label="Format" cls="h-[62px]"><Combo value="unv" /></Field>
          <Field label="Set maximum mesh element size" cls="h-[62px]"><Spin value="2,00" /></Field>
          <Field label="Set mesh order" cls="h-[61px]"><Spin value="2" /></Field>
          <div className="flex h-[58px] shrink-0 items-center pl-[8px]">
            <Check />
            <span className="pt-[2px] pl-[19px] tracking-[0.250px]">Create Mechanical Analysis from mesh</span>
          </div>
          <Field label="Custom gmsh options" cls="h-[62px]"><Spin value="" /></Field>
          <div className="flex h-[60px] shrink-0 items-center pr-[6px] pl-[7px]">
            <button className="flex h-[19px] w-[251px] items-center justify-center rounded-[4px] border border-[#b1aca8] border-t-[#ebe8e5] bg-linear-to-b from-[#dad6d3] to-[#c9c5c0] pt-px tracking-[0.250px] shadow-[0_1px_1px_#87827f]">
              gmsh options (web)
            </button>
            <div className="flex grow justify-end gap-[7px] pt-px">
              <button className="flex h-[21px] w-[63px] items-center gap-[7px] rounded-[4px] border border-[#c2bebb] border-t-[#fff] bg-linear-to-b from-[#f3f2f1] to-[#dcdad7] pl-[11px] shadow-[0_1px_1px_#87827f]">
                <svg width="15" height="13" viewBox="0 0 15 13">
                  <path d="M1 6.500L3.500 4.500L6 7L12 1L14 3L6.500 12Z" fill="#5c82b0" stroke="#273f5e" />
                </svg>
                <span className="pt-px">OK</span>
              </button>
              <button className="flex h-[21px] w-[85px] items-center gap-[8px] rounded-[4px] border border-[#b1aca8] border-t-[#ebe8e5] bg-linear-to-b from-[#dad6d3] to-[#c9c5c0] pl-[11px] shadow-[0_1px_1px_#87827f]">
                <svg width="15" height="15" viewBox="0 0 14 14" fill="none">
                  <circle cx="7" cy="7" r="6.500" fill="#c9150f" stroke="#8a0c08" />
                  <circle cx="7" cy="7" r="3.600" stroke="#f7dcd8" strokeWidth="1.300" />
                  <path d="M4.500 9.500L9.500 4.500" stroke="#f7dcd8" strokeWidth="1.300" />
                </svg>
                <span className="pt-px">Cancel</span>
              </button>
            </div>
          </div>
        </aside>
      </main>

      <footer className="flex h-[28px] shrink-0 items-center justify-end pt-[2px] pr-2">
        <span className="tracking-[0.250px]">269.28 x 177.68 mm</span>
      </footer>
    </div>
  );
}
